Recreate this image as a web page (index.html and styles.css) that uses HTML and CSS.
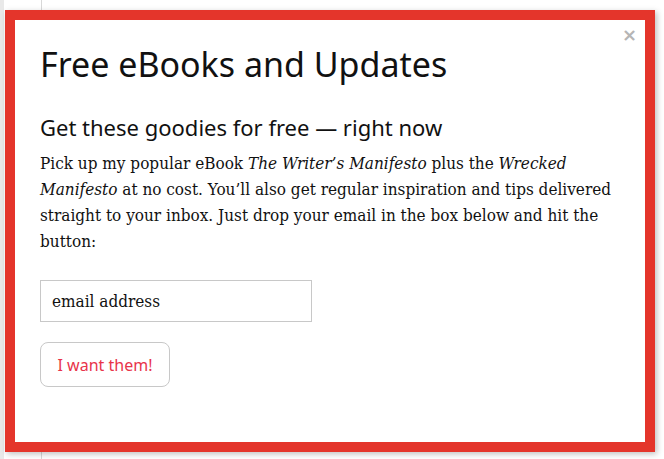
FILE: index.html
```html
<!DOCTYPE html>
<html lang="en">
	<head>
		<meta charset="utf-8">
		<title>Free eBooks and Updates</title>
		<link rel="stylesheet" href="styles.css">
	</head>
	<body>
		<div class="backdrop">
			<div class="modal">
				<button class="close" title="close">&times;</button>
				<h1>Free eBooks and Updates</h1>
				<h2>Get these goodies for free — right now</h2>
				<p>Pick up my popular eBook <em>The Writer’s Manifesto</em> plus the <em>Wrecked Manifesto</em> at no cost. You’ll also get regular inspiration and tips delivered straight to your inbox. Just drop your email in the box below and hit the button:</p>
				<form class="signup" onsubmit="return false">
					<input type="email" name="email" value="email address">
					<button type="submit" class="submit">I want them!</button>
				</form>
			</div>
		</div>
	</body>
</html>
```

FILE: styles.css
```css
html
{
	background: #f4f4f4;
}

body
{
	margin: 0;
	height: 459px;
	overflow: hidden;
	background: linear-gradient(to right, #e9e9e9 0, #e9e9e9 4px, #fff 4px, #fff 41px, #d8d8d8 41px, #d8d8d8 42px, #fff 42px);
}

.backdrop
{
	padding: 10px 9px 0 5px;
}

.modal
{
	position: relative;
	height: 422px;
	border: 10px solid #e4352b;
	background: #fff;
	padding: 0 25px;
	box-shadow: 2px 2px 6px rgba(0, 0, 0, 0.25);
}

.close
{
	position: absolute;
	top: 4px;
	right: 8px;
	border: none;
	background: transparent;
	color: #b5b5b5;
	font-family: "DejaVu Sans", sans-serif;
	font-weight: bold;
	font-size: 18px;
	padding: 0;
	cursor: pointer;
}

h1
{
	font-family: "Noto Sans", "Open Sans", sans-serif;
	font-weight: normal;
	font-size: 34px;
	line-height: 40px;
	margin: 24px 0 0;
	color: #111;
}

h2
{
	font-family: "Noto Sans", "Open Sans", sans-serif;
	font-weight: normal;
	font-size: 22px;
	line-height: 30px;
	margin: 28px 0 0;
	color: #111;
}

p
{
	font-family: "DejaVu Serif Condensed", "DejaVu Serif", serif;
	font-stretch: semi-condensed;
	font-size: 17px;
	line-height: 26px;
	margin: 8px 0 0;
	color: #111;
}

.signup
{
	display: flex;
	flex-direction: column;
	align-items: flex-start;
	gap: 20px;
	margin-top: 26px;
}

.signup input
{
	box-sizing: border-box;
	width: 272px;
	height: 42px;
	border: 1px solid #c8c8c8;
	padding: 0 11px;
	font-family: "DejaVu Serif Condensed", "DejaVu Serif", serif;
	font-stretch: semi-condensed;
	font-size: 17px;
	color: #111;
	outline: none;
}

.submit
{
	box-sizing: border-box;
	width: 130px;
	height: 45px;
	border: 1px solid #c8c8c8;
	border-radius: 8px;
	background: #fff;
	color: #e8334a;
	font-family: "Noto Sans", "Open Sans", sans-serif;
	font-size: 16px;
	cursor: pointer;
}
```
